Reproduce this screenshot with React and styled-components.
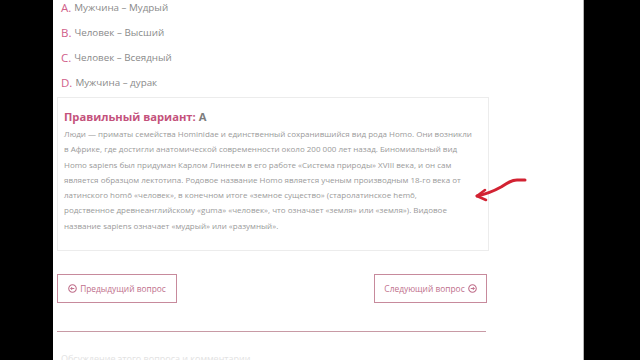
import React from "react";
import styled, { createGlobalStyle } from "styled-components";

const GlobalStyle = createGlobalStyle`
  html, body {
    margin: 0;
    padding: 0;
    background: #000;
    overflow: hidden;
  }
  body {
    font-family: "Open Sans", "Noto Sans", sans-serif;
  }
`;

const StScreen = styled.div`
  display: flex;
  width: 640px;
  height: 360px;
  background: #000;
`;
const StSideBar = styled.div`
  width: ${(p) => p.w}px;
  flex-shrink: 0;
  background: #000;
  border-left: ${(p) => (p.edge ? "1px solid #b5b5b5" : "none")};
`;
const StPage = styled.div`
  position: relative;
  width: 530px;
  flex-shrink: 0;
  background: #fff;
  overflow: hidden;
`;
const StOptions = styled.div`
  display: flex;
  flex-direction: column;
  margin-top: -5px;
  padding-left: 8px;
`;
const StOption = styled.div`
  display: flex;
  align-items: center;
  height: 25px;
  font-size: 9.8px;
  color: #8a8a8a;
`;
const StLetter = styled.span`
  color: #d0608a;
  font-size: 11.5px;
  margin-right: 3px;
`;
const StAnswerBox = styled.div`
  margin: 2px 0 0 4px;
  width: 424px;
  border: 1px solid #ececec;
  padding: 11px 0 17px 6px;
`;
const StAnswerTitle = styled.div`
  font-size: 11.2px;
  font-weight: 700;
  line-height: 16px;
  color: #c4527c;
  span {
    color: #7d7d7d;
  }
`;
const StAnswerText = styled.div`
  margin-top: 1px;
  font-size: 8px;
  line-height: 15.3px;
  color: #9a9a9a;
  white-space: nowrap;
`;
const StButtons = styled.div`
  display: flex;
  justify-content: space-between;
  width: 430px;
  margin: 23px 0 0 4px;
`;
const StNavButton = styled.button`
  display: flex;
  align-items: center;
  gap: 3px;
  height: 29px;
  width: ${(p) => p.w}px;
  justify-content: center;
  background: #fff;
  border: 1.5px solid #c78a9c;
  font-family: "Open Sans", "Noto Sans", sans-serif;
  font-size: 8.4px;
  color: #c0708c;
  padding: 0;
`;
const StDivider = styled.div`
  width: 429px;
  height: 1px;
  margin: 28px 0 0 4px;
  background: #c89aa5;
`;
const StFaint = styled.div`
  margin: 21px 0 0 8px;
  font-size: 9px;
  line-height: 12px;
  color: #e2e2e2;
`;
const StArrow = styled.svg`
  position: absolute;
  left: 366px;
  top: 175px;
`;

const options = [
  { letter: "A.", text: "Мужчина – Мудрый" },
  { letter: "B.", text: "Человек – Высший" },
  { letter: "C.", text: "Человек – Всеядный" },
  { letter: "D.", text: "Мужчина – дурак" },
];

const lines = [
  "Люди — приматы семейства Hominidae и единственный сохранившийся вид рода Homo. Они возникли",
  "в Африке, где достигли анатомической современности около 200 000 лет назад. Биномиальный вид",
  "Homo sapiens был придуман Карлом Линнеем в его работе «Система природы» XVIII века, и он сам",
  "является образцом лектотипа. Родовое название Homo является ученым производным 18-го века от",
  "латинского homō «человек», в конечном итоге «земное существо» (старолатинское hemō,",
  "родственное древнеанглийскому «guma» «человек», что означает «земля» или «земля»). Видовое",
  "название sapiens означает «мудрый» или «разумный».",
];

function CircleArrow({ dir }) {
  return (
    <svg width="9" height="9" viewBox="0 0 10 10">
      <circle cx="5" cy="5" r="4.2" fill="none" stroke="#c0708c" strokeWidth="1.2" />
      {dir === "left" ? (
        <path d="M7 5H3M4.6 3.4L3 5l1.6 1.6" fill="none" stroke="#c0708c" strokeWidth="1.1" />
      ) : (
        <path d="M3 5h4M5.4 3.4L7 5 5.4 6.6" fill="none" stroke="#c0708c" strokeWidth="1.1" />
      )}
    </svg>
  );
}

function App() {
  return (
    <>
      <GlobalStyle />
      <StScreen>
        <StSideBar w={53} />
        <StPage>
          <StOptions>
            {options.map((item) => (
              <StOption key={item.letter}>
                <StLetter>{item.letter}</StLetter>
                {item.text}
              </StOption>
            ))}
          </StOptions>
          <StAnswerBox>
            <StAnswerTitle>
              Правильный вариант: <span>A</span>
            </StAnswerTitle>
            <StAnswerText>
              {lines.map((line) => (
                <div key={line}>{line}</div>
              ))}
            </StAnswerText>
          </StAnswerBox>
          <StButtons>
            <StNavButton w={120}>
              <CircleArrow dir="left" />
              Предыдущий вопрос
            </StNavButton>
            <StNavButton w={113}>
              Следующий вопрос
              <CircleArrow dir="right" />
            </StNavButton>
          </StButtons>
          <StDivider />
          <StFaint>Обсуждение этого вопроса и комментарии</StFaint>
          <StArrow width="110" height="30" viewBox="0 0 110 30">
            <path
              d="M58 21 C67 19 75 16 82 12 C88 8 92 5 98 5 L106 5"
              fill="none"
              stroke="#d22232"
              strokeWidth="3"
              strokeLinecap="round"
            />
            <path
              d="M66 15 L58 21 L67 25"
              fill="none"
              stroke="#d22232"
              strokeWidth="2.6"
              strokeLinecap="round"
              strokeLinejoin="round"
            />
          </StArrow>
        </StPage>
        <StSideBar w={56} edge />
      </StScreen>
    </>
  );
}

export default App;
